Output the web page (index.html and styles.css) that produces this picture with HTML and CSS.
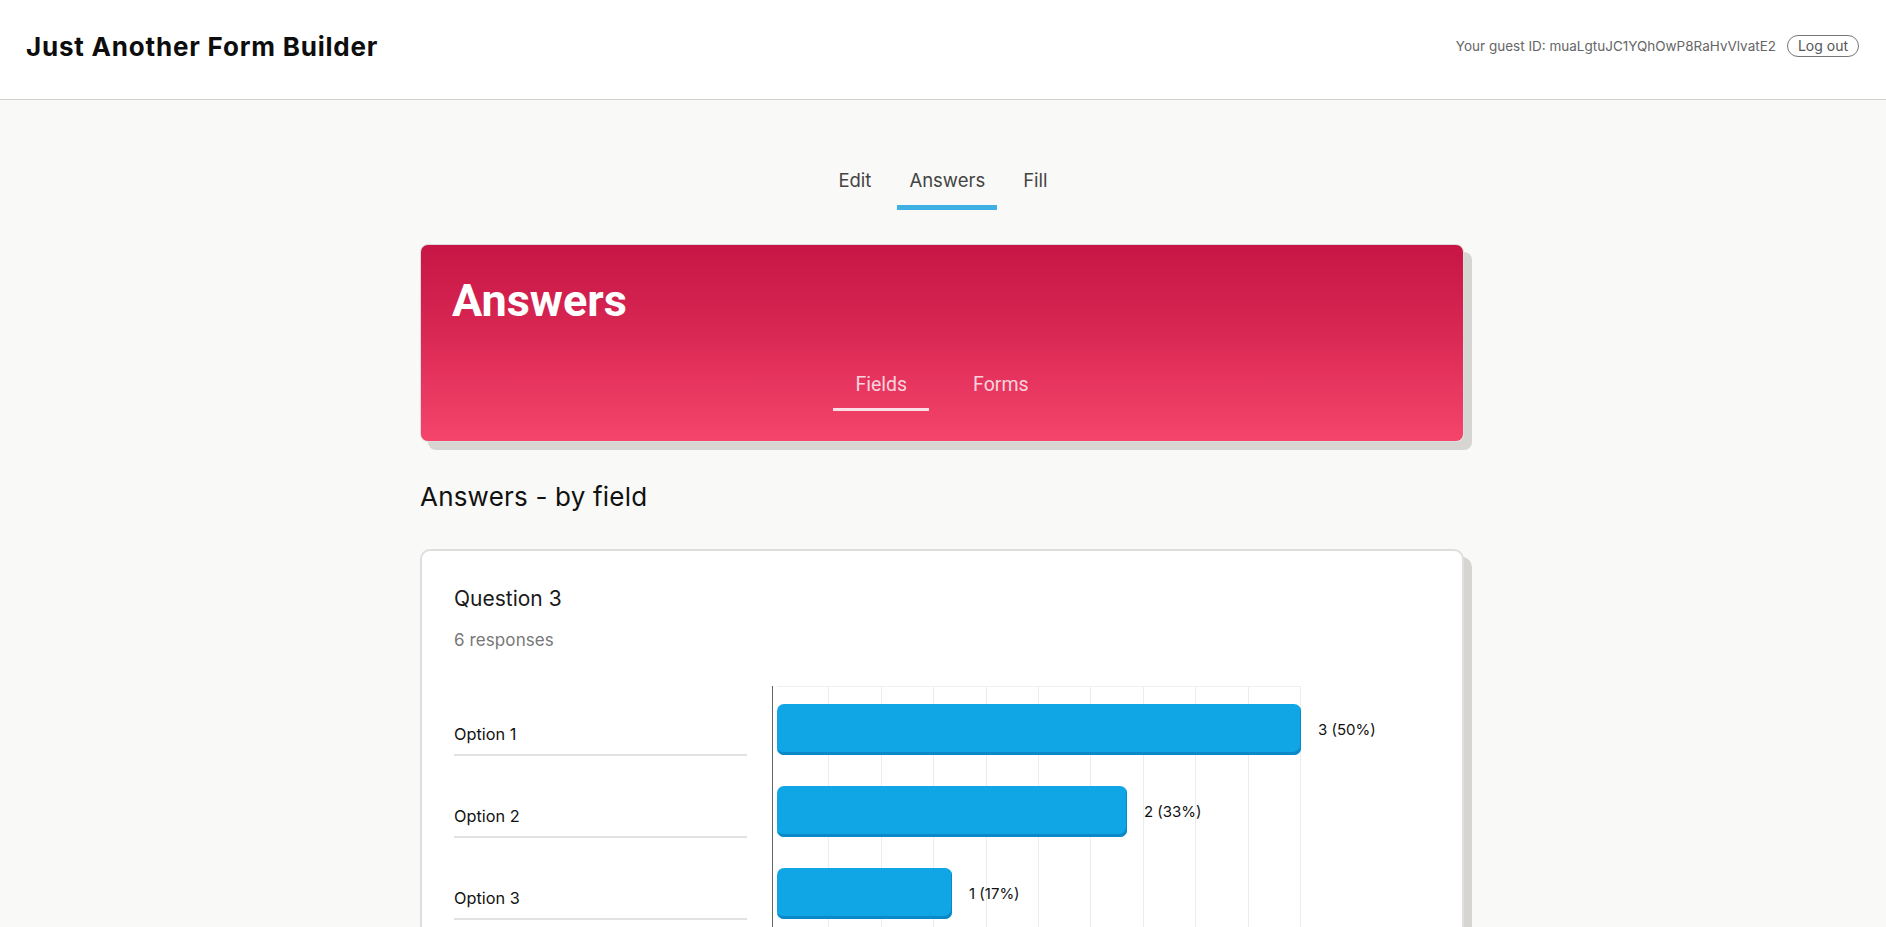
FILE: index.html
```html
<!DOCTYPE html>
<html lang="en">
<head>
<meta charset="utf-8">
<title>Just Another Form Builder</title>
<link rel="stylesheet" href="styles.css">
</head>
<body>
<header class="topbar">
  <div class="brand">Just Another Form Builder</div>
  <div class="user">
    <span class="guest">Your guest ID: muaLgtuJC1YQhOwP8RaHvVlvatE2</span>
    <button class="logout">Log out</button>
  </div>
</header>
<main class="page">
  <nav class="tabs">
    <a class="tab">Edit</a>
    <a class="tab active">Answers</a>
    <a class="tab">Fill</a>
  </nav>
  <section class="banner">
    <h1 class="banner-title">Answers</h1>
    <nav class="subtabs">
      <a class="subtab active">Fields</a>
      <a class="subtab">Forms</a>
    </nav>
  </section>
  <h2 class="section-title">Answers - by field</h2>
  <section class="card">
    <div class="question">Question 3</div>
    <div class="responses">6 responses</div>
    <div class="chart">
      <div class="labels">
        <div class="label-row">Option 1</div>
        <div class="label-row">Option 2</div>
        <div class="label-row">Option 3</div>
      </div>
      <div class="plot">
        <div class="bar-row"><div class="bar" style="width:524px"></div><span class="value">3 (50%)</span></div>
        <div class="bar-row"><div class="bar" style="width:350px"></div><span class="value">2 (33%)</span></div>
        <div class="bar-row"><div class="bar" style="width:175px"></div><span class="value">1 (17%)</span></div>
      </div>
    </div>
  </section>
</main>
</body>
</html>
```

FILE: styles.css
```css
* { box-sizing: border-box; }
html, body { margin: 0; padding: 0; }
body {
  background: #f9f9f7;
  font-family: Inter, "Noto Sans", sans-serif;
  color: #111;
  overflow: hidden;
}
.topbar {
  height: 100px;
  background: #fff;
  border-bottom: 1px solid #cfcfcd;
  display: flex;
  align-items: center;
  justify-content: space-between;
  padding: 0 27px 7px 26px;
}
.brand {
  font-size: 26px;
  font-weight: 700;
  color: #0d0d0d;
  letter-spacing: 0.8px;
}
.user { display: flex; align-items: center; gap: 11px; }
.guest { font-size: 13.5px; color: #666; }
.logout {
  font-family: inherit;
  font-size: 14px;
  color: #555;
  background: #fff;
  border: 1px solid #777;
  border-radius: 12px;
  height: 22px;
  width: 72px;
  padding: 0;
  line-height: 20px;
}
.page { width: 1044px; margin-left: calc(50% - 523px); padding-top: 68px; }
.tabs { display: flex; justify-content: center; gap: 14px; padding-left: 2px; }
.tab {
  font-size: 18.5px;
  line-height: 24px;
  color: #444;
  padding: 0 12px 13px;
  border-bottom: 5px solid transparent;
}
.tab.active { border-bottom-color: #3fb0e3; }
.banner {
  margin-top: 34px;
  height: 198px;
  border: 1px solid #dcdcdc;
  border-radius: 8px;
  background: linear-gradient(to bottom, #c71545 0%, #dc2a56 50%, #f5456b 100%);
  box-shadow: 8px 8px 0 #d7d5d1;
  padding: 30px 31px 0;
}
.banner-title {
  margin: 0;
  font-family: Roboto, "Liberation Sans", sans-serif;
  font-weight: 700;
  font-size: 45px;
  line-height: 52px;
  color: #fff;
}
.subtabs { display: flex; justify-content: center; gap: 22px; margin-top: 47px; }
.subtab {
  font-family: Roboto, "Liberation Sans", sans-serif;
  font-size: 19.5px;
  line-height: 22px;
  color: rgba(255, 255, 255, 0.8);
  padding: 0 22px 12px;
  border-bottom: 3px solid transparent;
}
.subtab.active { border-bottom-color: rgba(255, 240, 244, 0.9); }
.section-title {
  margin: 40px 0 0;
  font-size: 26px;
  line-height: 30px;
  font-weight: 400;
  letter-spacing: 0.2px;
  color: #111;
}
.card {
  margin-top: 37px;
  background: #fff;
  border: 2px solid #dedede;
  border-radius: 10px;
  box-shadow: 8px 8px 0 #d7d5d1;
  padding: 36px 32px 60px;
}
.question { font-size: 21px; line-height: 24px; color: #1a1a1a; }
.responses { margin-top: 19px; font-size: 17px; line-height: 20px; color: #777; letter-spacing: 0.1px; }
.chart { display: flex; align-items: flex-start; gap: 25px; margin-top: 24px; }
.labels { width: 293px; }
.label-row {
  height: 82px;
  display: flex;
  align-items: flex-end;
  padding-bottom: 10px;
  border-bottom: 2px solid #e2e2e2;
  font-size: 16.3px;
  line-height: 20px;
  color: #111;
}
.plot {
  flex: 1;
  margin-top: 12px;
  border-left: 1px solid #666;
  padding: 18px 0 0 4px;
  background-image:
    linear-gradient(to bottom, #efefef 1px, transparent 1px),
    repeating-linear-gradient(to right, transparent 0 51.4px, #ececec 51.4px 52.4px);
  background-repeat: no-repeat;
  background-size: 524px 100%;
  background-position: 4px 0;
  background-origin: padding-box;
}
.bar-row { display: flex; align-items: center; height: 51px; margin-bottom: 31px; }
.bar {
  height: 51px;
  background: #10a6e6;
  border-radius: 7px;
  box-shadow: inset -1px -3px 0 #0b88c8;
  flex: none;
}
.value { margin-left: 17px; font-size: 15px; color: #111; }
```
